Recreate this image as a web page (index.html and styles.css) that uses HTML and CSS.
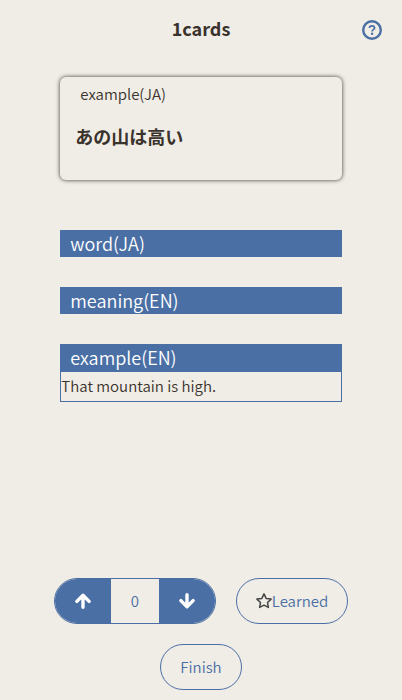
FILE: index.html
```html
<!DOCTYPE html>
<html lang="en">
<head>
<meta charset="utf-8">
<meta name="viewport" content="width=device-width, initial-scale=1">
<title>Cards</title>
<link rel="stylesheet" href="styles.css">
</head>
<body>
<header class="header">
  <h1 class="title">1cards</h1>
  <button class="help" type="button" aria-label="Help">
    <svg width="20" height="20" viewBox="0 0 20 20" fill="none" stroke="currentColor">
      <circle cx="10" cy="10" r="8.8" stroke-width="2.4"/>
      <path d="M7.5 8.1C7.5 6.6 8.6 5.8 10 5.8s2.5.8 2.5 2.1c0 1.6-2.4 1.8-2.4 3.5" stroke-width="1.8"/>
      <circle cx="10.1" cy="13.7" r="1.2" fill="currentColor" stroke="none"/>
    </svg>
  </button>
</header>
<main class="main">
  <section class="card">
    <h2 class="card-label">example(JA)</h2>
    <p class="card-text" lang="ja">あの山は高い</p>
  </section>
  <section class="fields">
    <button class="field-name" type="button">word(JA)</button>
    <button class="field-name" type="button">meaning(EN)</button>
    <div class="field">
      <button class="field-name" type="button" aria-expanded="true">example(EN)</button>
      <p class="field-text">That mountain is high.</p>
    </div>
  </section>
</main>
<footer class="footer">
  <div class="row">
    <div class="stepper">
      <button class="step" type="button" aria-label="Previous">
        <svg width="16" height="16" viewBox="0 0 16 16" fill="none" stroke="currentColor" stroke-width="3.4" stroke-linecap="round" stroke-linejoin="round"><path d="M8 14.3V2.5M1.9 8.4 8 2.3 14.1 8.4"/></svg>
      </button>
      <output class="count">0</output>
      <button class="step" type="button" aria-label="Next">
        <svg width="16" height="16" viewBox="0 0 16 16" fill="none" stroke="currentColor" stroke-width="3.4" stroke-linecap="round" stroke-linejoin="round"><path d="M8 1.7v11.8M1.9 7.6 8 13.7 14.1 7.6"/></svg>
      </button>
    </div>
    <button class="pill" type="button">
      <svg class="star" width="16" height="16" viewBox="0 0 16 16" fill="none" stroke="currentColor" stroke-width="1.5" stroke-linejoin="round"><path d="M8 .9l2.15 4.5 4.95.7-3.6 3.45.88 4.9L8 12.1l-4.38 2.35.88-4.9L.9 6.1l4.95-.7z"/></svg>
      Learned
    </button>
  </div>
  <button class="pill" type="button">Finish</button>
</footer>
</body>
</html>
```
FILE: styles.css
```css
:root {
  --paper: #f0ede6;
  --ink: #3a322c;
  --blue: #4a6fa5;
}

* {
  box-sizing: border-box;
}

body {
  margin: 0;
  min-height: 100vh;
  display: flex;
  flex-direction: column;
  background: var(--paper);
  color: var(--ink);
  font: 350 15px/28px "Noto Sans CJK JP", sans-serif;
}

h1, h2, p {
  margin: 0;
}

button {
  font: inherit;
  color: inherit;
  cursor: pointer;
}

.header {
  display: grid;
  grid-template-columns: 1fr auto 1fr;
  align-items: start;
  padding: 14px 20px;
}

.title {
  grid-column: 2;
  font-size: 18px;
  line-height: 28px;
}

.help {
  justify-self: end;
  display: flex;
  padding: 6px 0;
  border: 0;
  background: none;
  color: var(--blue);
}

.main {
  flex: 1;
  width: 70%;
  margin: 17px auto 0;
}

.card {
  min-height: 103px;
  padding: 3px 15px 20px;
  border-radius: 6px;
  box-shadow: 0 0 4px #3a322c;
  background: var(--paper);
}

.card-label {
  padding-left: 5px;
  font-size: 15px;
  font-weight: 350;
}

.card-text {
  margin-top: 14px;
  font-size: 18px;
  font-weight: 700;
}

.fields {
  display: flex;
  flex-direction: column;
  gap: 30px;
  margin-top: 50px;
}

.field-name {
  display: block;
  width: 100%;
  padding: 0 10px;
  border: 0;
  background: var(--blue);
  color: #fff;
  font-size: 18px;
  line-height: 27px;
  text-align: left;
}

.field-text {
  padding-bottom: 1px;
  border: 1px solid var(--blue);
}

.footer {
  display: flex;
  flex-direction: column;
  align-items: center;
  gap: 20px;
  padding-bottom: 10px;
}

.row {
  display: flex;
  gap: 20px;
}

.stepper {
  display: flex;
  height: 46px;
  border: 1px solid var(--blue);
  border-radius: 23px;
  overflow: hidden;
  color: var(--blue);
}

.step {
  display: flex;
  align-items: center;
  justify-content: center;
  width: 56px;
  padding: 0;
  border: 0;
  background: var(--blue);
  color: #fff;
}

.count {
  width: 48px;
  line-height: 44px;
  text-align: center;
}

.pill {
  display: flex;
  align-items: center;
  justify-content: center;
  height: 46px;
  padding: 0 19px;
  border: 1px solid var(--blue);
  border-radius: 23px;
  background: transparent;
  color: var(--blue);
}

.star {
  color: #444;
}
```
